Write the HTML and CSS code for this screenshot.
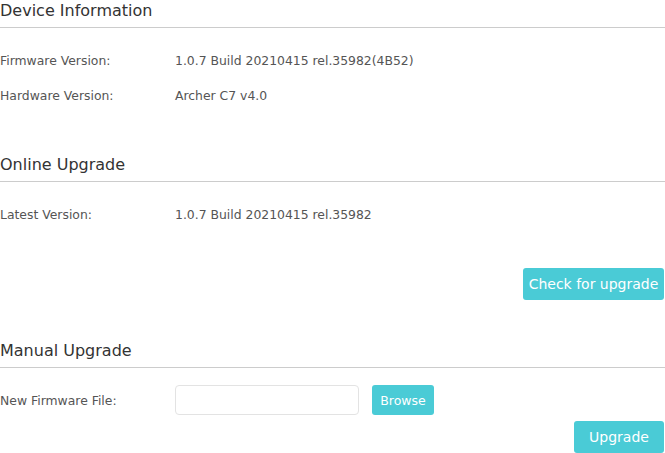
FILE: index.html
```html
<!DOCTYPE html>
<html>
<head>
<meta charset="utf-8">
<link rel="stylesheet" href="styles.css">
</head>
<body>
<div class="page">
  <section class="sec sec-device">
    <h2 class="title">Device Information</h2>
    <div class="rows">
      <div class="row"><span class="label">Firmware Version:</span><span class="value">1.0.7 Build 20210415 rel.35982(4B52)</span></div>
      <div class="row"><span class="label">Hardware Version:</span><span class="value">Archer C7 v4.0</span></div>
    </div>
  </section>
  <section class="sec sec-online">
    <h2 class="title">Online Upgrade</h2>
    <div class="rows">
      <div class="row"><span class="label">Latest Version:</span><span class="value">1.0.7 Build 20210415 rel.35982</span></div>
    </div>
    <div class="actions actions-check"><button class="btn btn-lg">Check for upgrade</button></div>
  </section>
  <section class="sec sec-manual">
    <h2 class="title">Manual Upgrade</h2>
    <div class="row row-file">
      <span class="label">New Firmware File:</span>
      <span class="file-input"></span>
      <button class="btn btn-sm">Browse</button>
    </div>
    <div class="actions actions-upgrade"><button class="btn btn-up">Upgrade</button></div>
  </section>
</div>
</body>
</html>
```
FILE: styles.css
```css
* { box-sizing: border-box; }
html, body { margin: 0; padding: 0; background: #fff; }
body { font-family: "DejaVu Sans", Verdana, sans-serif; color: #555; }
.page { width: 665px; }
.title {
  margin: 0;
  height: 28px;
  font-size: 16px;
  font-weight: normal;
  color: #333;
  line-height: 22px;
  border-bottom: 1px solid #ccc;
}
.rows { padding-top: 15px; }
.row { display: flex; align-items: center; height: 35px; font-size: 12.4px; }
.label { width: 175px; flex: none; }
.value { color: #555; }
.sec-online { margin-top: 41px; }
.sec-manual { margin-top: 40px; }
.actions { display: flex; justify-content: flex-end; padding-right: 1px; }
.actions-check { margin-top: 36px; }
.btn {
  border: none;
  background: #4acbd6;
  color: #fff;
  font-family: "DejaVu Sans", Verdana, sans-serif;
  border-radius: 3px;
  padding: 0;
}
.btn-lg { width: 141px; height: 32px; font-size: 14px; }
.row-file { margin-top: 17px; height: 30px; }
.file-input {
  width: 184px; height: 30px;
  border: 1px solid #e3e3e3; border-radius: 4px;
  margin-right: 13px;
}
.btn-sm { width: 62px; height: 30px; font-size: 12.5px; }
.actions-upgrade { margin-top: 6px; }
.btn-up { width: 90px; height: 32px; font-size: 14px; }
```
